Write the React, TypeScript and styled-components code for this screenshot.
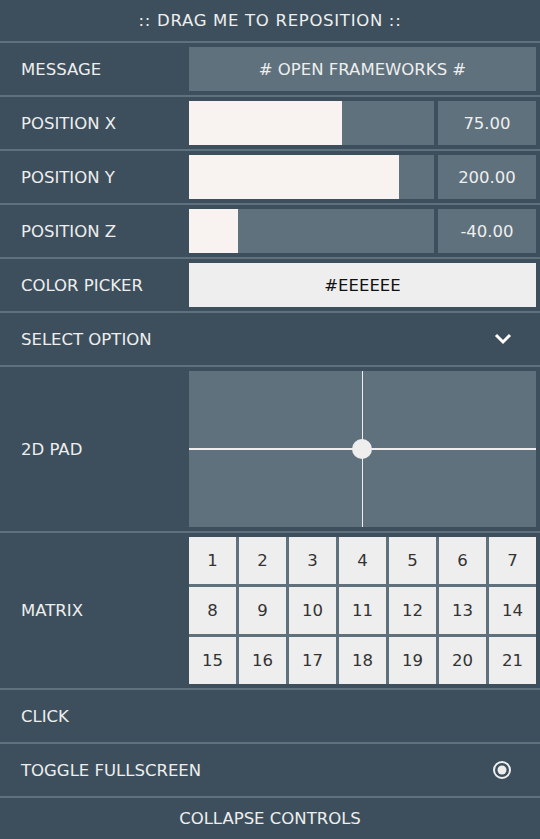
import React from 'react';
import styled, { createGlobalStyle } from 'styled-components';

const DARK = '#3d4f5c';
const SLATE = '#5f717d';
const LIGHT = '#eeeeee';
const FILL = '#f8f3f0';

const GlobalStyle = createGlobalStyle`
  html, body {
    margin: 0;
    padding: 0;
    background: ${DARK};
  }
`;

const Panel = styled.div`
  width: 540px;
  background: ${DARK};
  color: #eeeeee;
  font-family: "DejaVu Sans", Verdana, sans-serif;
  font-size: 16.5px;
  user-select: none;
`;

const Title = styled.div`
  height: 41px;
  display: flex;
  align-items: center;
  justify-content: center;
  letter-spacing: 0.7px;
`;

const Row = styled.div`
  display: grid;
  grid-template-columns: 189px 1fr;
  align-items: center;
  border-top: 2px solid ${SLATE};
  padding: 4px 4px 4px 0;
`;

const Label = styled.div`
  padding-left: 21px;
`;

const Plain = styled.div`
  display: flex;
  align-items: center;
  justify-content: space-between;
  height: 44px;
  border-top: 2px solid ${SLATE};
  padding: 4px 28px 4px 21px;
`;

const Footer = styled.div`
  height: 40px;
  border-top: 2px solid ${SLATE};
  display: flex;
  align-items: center;
  justify-content: center;
`;

const TextBox = styled.div<{ $light?: boolean }>`
  height: 44px;
  display: flex;
  align-items: center;
  justify-content: center;
  background: ${(p) => (p.$light ? LIGHT : SLATE)};
  color: ${(p) => (p.$light ? '#111' : '#eeeeee')};
`;

const SliderWrap = styled.div`
  display: grid;
  grid-template-columns: 245px 1fr;
  gap: 4px;
  height: 44px;
`;

const Track = styled.div`
  background: ${SLATE};
  overflow: hidden;
`;

const Fill = styled.div`
  height: 100%;
  background: ${FILL};
`;

const Pad = styled.div`
  height: 156px;
  background: ${SLATE};
  position: relative;
`;

const HLine = styled.div`
  position: absolute;
  left: 0;
  right: 0;
  top: 77px;
  height: 2px;
  background: ${LIGHT};
`;

const VLine = styled.div`
  position: absolute;
  top: 0;
  bottom: 0;
  left: 173px;
  width: 1px;
  background: ${LIGHT};
`;

const Knob = styled.div`
  position: absolute;
  width: 20px;
  height: 20px;
  border-radius: 50%;
  background: ${LIGHT};
  left: 163px;
  top: 68px;
`;

const Matrix = styled.div`
  display: grid;
  grid-template-columns: repeat(7, 47px);
  grid-auto-rows: 47px;
  gap: 3px;
  background: ${SLATE};
`;

const Cell = styled.div`
  background: ${LIGHT};
  color: #333;
  display: flex;
  align-items: center;
  justify-content: center;
`;

const sliders = [
  { label: 'POSITION X', value: '75.00', pct: 62.5 },
  { label: 'POSITION Y', value: '200.00', pct: 85.7 },
  { label: 'POSITION Z', value: '-40.00', pct: 20 },
];

function Chevron() {
  return (
    <svg width="18" height="12" viewBox="0 0 18 12">
      <path d="M2 2 L9 9 L16 2" fill="none" stroke="#fff" strokeWidth="3" />
    </svg>
  );
}

function Radio() {
  return (
    <svg width="20" height="20" viewBox="0 0 20 20">
      <circle cx="10" cy="10" r="8" fill="none" stroke="#eeeeee" strokeWidth="2" />
      <circle cx="10" cy="10" r="4.5" fill="#eeeeee" />
    </svg>
  );
}

export default function App() {
  const cells = Array.from({ length: 21 }, (_, i) => i + 1);

  return (
    <>
      <GlobalStyle />
      <Panel>
        <Title>:: DRAG ME TO REPOSITION ::</Title>

        <Row>
          <Label>MESSAGE</Label>
          <TextBox># OPEN FRAMEWORKS #</TextBox>
        </Row>

        {sliders.map((s) => (
          <Row key={s.label}>
            <Label>{s.label}</Label>
            <SliderWrap>
              <Track>
                <Fill style={{ width: s.pct + '%' }} />
              </Track>
              <TextBox>{s.value}</TextBox>
            </SliderWrap>
          </Row>
        ))}

        <Row>
          <Label>COLOR PICKER</Label>
          <TextBox $light>#EEEEEE</TextBox>
        </Row>

        <Plain>
          <span>SELECT OPTION</span>
          <Chevron />
        </Plain>

        <Row>
          <Label>2D PAD</Label>
          <Pad>
            <HLine />
            <VLine />
            <Knob />
          </Pad>
        </Row>

        <Row>
          <Label>MATRIX</Label>
          <Matrix>
            {cells.map((n) => (
              <Cell key={n}>{n}</Cell>
            ))}
          </Matrix>
        </Row>

        <Plain>
          <span>CLICK</span>
        </Plain>

        <Plain>
          <span>TOGGLE FULLSCREEN</span>
          <Radio />
        </Plain>

        <Footer>COLLAPSE CONTROLS</Footer>
      </Panel>
    </>
  );
}
